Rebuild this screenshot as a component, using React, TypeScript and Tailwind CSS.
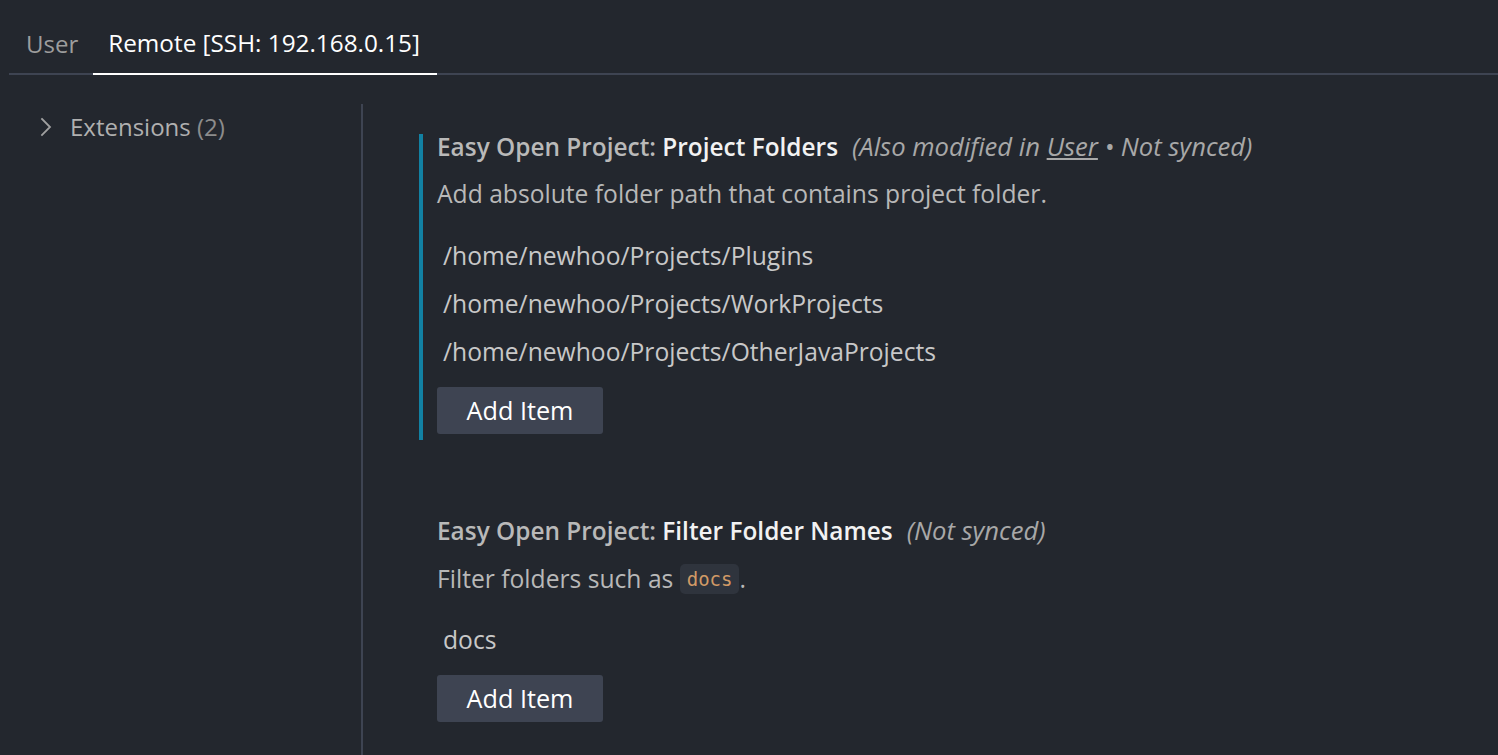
import React from "react";

function Chevron() {
  return (
    <svg width="14" height="22" viewBox="0 0 14 22" fill="none">
      <path d="M3 3 L11 11 L3 19" stroke="#a0a0a0" strokeWidth="1.8" strokeLinecap="square" strokeLinejoin="miter" />
    </svg>
  );
}

function AddButton() {
  return (
    <button className="h-[47px] w-[166px] rounded-[3px] bg-[#3e4452] text-[25.2px] text-white flex items-center justify-center">
      Add Item
    </button>
  );
}

export default function App() {
  return (
    <div
      className="w-[1498px] h-[755px] bg-[#23272e] overflow-hidden flex flex-col"
      style={{ fontFamily: '"Open Sans", "Noto Sans", sans-serif' }}
    >
      {/* Tab bar */}
      <div className="ml-[9px] pt-[14px] flex border-b-2 border-[#3e4452]">
        <div className="h-[59px] pl-[17px] pr-[15px] flex items-center text-[24px] text-[#9d9d9d]">User</div>
        <div className="h-[59px] pl-[15px] pr-[17px] flex items-center text-[24.3px] text-white border-b-2 border-white mb-[-2px] box-content">
          Remote [SSH: 192.168.0.15]
        </div>
      </div>

      {/* Body */}
      <div className="flex flex-1 mt-[29px]">
        {/* Sidebar */}
        <div className="w-[361px] shrink-0">
          <div className="h-[46px] flex items-center pl-[39px]">
            <Chevron />
            <span className="ml-[17px] text-[24px] text-[#b0b0b0]">
              Extensions <span className="text-[#8c8c8c]">(2)</span>
            </span>
          </div>
        </div>
        <div className="w-[2px] bg-[#3e4452] shrink-0" />

        {/* Content */}
        <div className="flex-1 pl-[56px] pt-[30px]">
          {/* Setting 1 */}
          <div className="border-l-4 border-[#1281a3] pl-[14px] pb-[6px]">
            <div className="h-[26px] leading-[26px] text-[24.4px] whitespace-nowrap">
              <span className="font-semibold text-[#b9b9b9]">Easy Open Project: </span>
              <span className="font-semibold text-[#f2f2f2]">Project Folders</span>
              <span className="italic text-[#a8a8a8] ml-[14px] text-[25.6px]">
                (Also modified in <span className="underline">User</span> • Not synced)
              </span>
            </div>
            <div className="mt-[17px] h-[34px] leading-[34px] text-[24.65px] text-[#b8b8b8]">
              Add absolute folder path that contains project folder.
            </div>
            <div className="mt-[21px] pl-[6px] text-[24.65px] text-[#c8c8c8]">
              <div className="h-[48px] leading-[48px]">/home/newhoo/Projects/Plugins</div>
              <div className="h-[48px] leading-[48px]">/home/newhoo/Projects/WorkProjects</div>
              <div className="h-[48px] leading-[48px]">/home/newhoo/Projects/OtherJavaProjects</div>
            </div>
            <div className="mt-[11px]">
              <AddButton />
            </div>
          </div>

          {/* Setting 2 */}
          <div className="mt-[78px] border-l-4 border-transparent pl-[14px]">
            <div className="h-[26px] leading-[26px] text-[24.4px] whitespace-nowrap">
              <span className="font-semibold text-[#b9b9b9]">Easy Open Project: </span>
              <span className="font-semibold text-[#f2f2f2]">Filter Folder Names</span>
              <span className="italic text-[#a8a8a8] ml-[14px] text-[25.6px]">(Not synced)</span>
            </div>
            <div className="mt-[18px] h-[34px] leading-[34px] text-[24.65px] text-[#b8b8b8] flex items-center">
              <span>Filter folders such as&nbsp;</span>
              <span
                className="h-[30px] px-[7px] rounded-[5px] bg-[#2f343d] text-[#d19a66] text-[19px] leading-[30px]"
                style={{ fontFamily: '"DejaVu Sans Mono", "Liberation Mono", monospace' }}
              >
                docs
              </span>
              <span>.</span>
            </div>
            <div className="mt-[20px] pl-[6px] text-[24.65px] text-[#c8c8c8]">
              <div className="h-[48px] leading-[48px]">docs</div>
            </div>
            <div className="mt-[11px]">
              <AddButton />
            </div>
          </div>
        </div>
      </div>
    </div>
  );
}
